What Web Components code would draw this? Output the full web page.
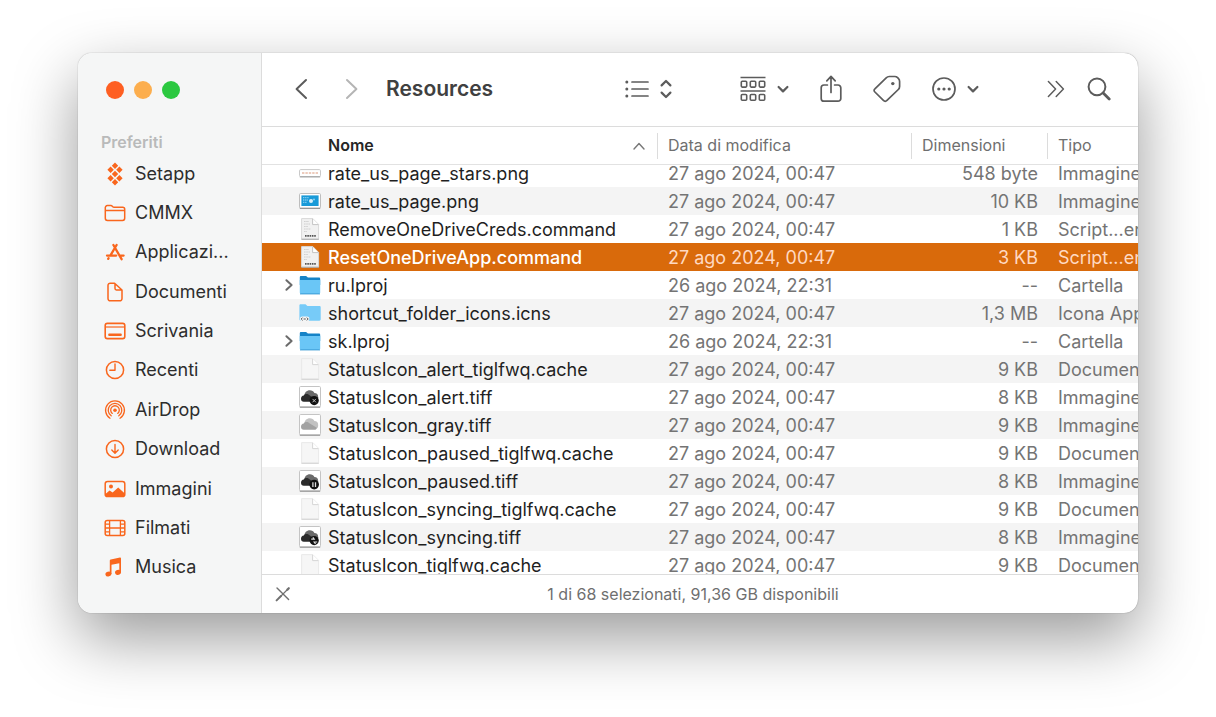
<!DOCTYPE html>
<html lang="it">
<head>
<meta charset="utf-8">
<meta name="viewport" content="width=device-width, initial-scale=1">
<title>Resources</title>
<style>
    * {
        box-sizing: border-box
    }
    body {
        margin: 0;
        height: 100vh;
        padding: 53px 78px 104px;
        background: white;
        font-family: Inter, "Liberation Sans", sans-serif;
        display: flex
    }
</style>
</head>
<body>
    <finder-window>
        <finder-sidebar slot="sidebar" heading="Preferiti">
            <sidebar-item icon="setapp">Setapp</sidebar-item>
            <sidebar-item icon="folder">CMMX</sidebar-item>
            <sidebar-item icon="apps">Applicazi...</sidebar-item>
            <sidebar-item icon="doc">Documenti</sidebar-item>
            <sidebar-item icon="desktop">Scrivania</sidebar-item>
            <sidebar-item icon="clock">Recenti</sidebar-item>
            <sidebar-item icon="airdrop">AirDrop</sidebar-item>
            <sidebar-item icon="download">Download</sidebar-item>
            <sidebar-item icon="picture">Immagini</sidebar-item>
            <sidebar-item icon="film">Filmati</sidebar-item>
            <sidebar-item icon="music">Musica</sidebar-item>
        </finder-sidebar>
        <finder-toolbar slot="toolbar">Resources</finder-toolbar>
        <file-list></file-list>
        <status-bar slot="status">1 di 68 selezionati, 91,36 GB disponibili</status-bar>
    </finder-window>

<script>
// every icon: [width, height, markup]
const ICONS = {
    // sidebar, 22 x 24
    setapp: [22, 24, `<g fill="currentColor">
        <path d="M11 0.5l3.2 3.2-3.2 3.2-3.2-3.2zM6.6 4.6l3.2 3.2-3.2 3.2-3.2-3.2zM15.4 4.6l3.2 3.2-3.2 3.2-3.2-3.2zM11 8.8l3.2 3.2-3.2 3.2-3.2-3.2zM6.6 13l3.2 3.2-3.2 3.2-3.2-3.2zM15.4 13l3.2 3.2-3.2 3.2-3.2-3.2zM11 17.1l3.2 3.2-3.2 3.2-3.2-3.2z"/></g>`],
    folder: [22, 24, `<path d="M1.3 17.2V6.6a2 2 0 0 1 2-2h3.6c1.6 0 1.6 1.7 3.2 1.7h8.6a2 2 0 0 1 2 2v8.9a2.2 2.2 0 0 1-2.2 2.2h-15a2.2 2.2 0 0 1-2.2-2.2zM1.3 9.6h19.4" fill="none" stroke="currentColor" stroke-width="1.5"/>`],
    apps: [22, 24, `<g fill="none" stroke="currentColor" stroke-width="2.3" stroke-linecap="round"><path d="M12.6 5L6.6 15.2M9.4 5l8.2 14.2M3 15.6h9.2M15.6 15.6h4M4.2 18.8l.4-.6"/></g>`],
    doc: [22, 24, `<path d="M4 18.6V5.4a2.2 2.2 0 0 1 2.2-2.2h4.4L18 10v8.6a2.2 2.2 0 0 1-2.2 2.2H6.2A2.2 2.2 0 0 1 4 18.6zM11 3.4v5.2c0 .9.5 1.4 1.4 1.4h5.4" fill="none" stroke="currentColor" stroke-width="1.5" stroke-linejoin="round"/>`],
    desktop: [22, 24, `<rect x="1.2" y="4.4" width="19.6" height="15.2" rx="2.2" fill="none" stroke="currentColor" stroke-width="1.6"/><path d="M1.3 8h19.4" stroke="currentColor" stroke-width="1.2"/><rect x="4.2" y="14.4" width="13.6" height="2.6" rx="1" fill="currentColor"/>`],
    clock: [22, 24, `<circle cx="11" cy="12" r="8.6" fill="none" stroke="currentColor" stroke-width="1.5"/><path d="M11 6v6.2H5.8" fill="none" stroke="currentColor" stroke-width="1.4" stroke-linecap="round" stroke-linejoin="round"/>`],
    airdrop: [22, 24, `<g fill="none" stroke="currentColor" stroke-width="1.3" stroke-linecap="round"><path d="M6 20.2a9.4 9.4 0 1 1 10 0"/><path d="M7.2 17.8a6.8 6.8 0 1 1 7.6 0"/><path d="M8.3 15.4a4.3 4.3 0 1 1 5.4 0"/></g><circle cx="11" cy="12.2" r="1.8" fill="currentColor"/>`],
    download: [22, 24, `<circle cx="11" cy="12" r="8.6" fill="none" stroke="currentColor" stroke-width="1.5"/><path d="M11 7.4v8.6M7.8 13l3.2 3.2 3.2-3.2" fill="none" stroke="currentColor" stroke-width="1.4" stroke-linecap="round" stroke-linejoin="round"/>`],
    picture: [22, 24, `<rect x="1.2" y="4.4" width="19.6" height="15.2" rx="2.4" fill="none" stroke="currentColor" stroke-width="1.5"/><circle cx="7" cy="9.4" r="2" fill="currentColor"/><path d="M1.4 17l4.2-3.6 3 2.2 5.6-5 6.6 5.8v1.6c0 1-.6 1.6-1.6 1.6H3c-1 0-1.6-.6-1.6-1.6z" fill="currentColor"/>`],
    film: [22, 24, `<rect x="1.2" y="4.4" width="19.6" height="15.2" rx="2" fill="none" stroke="currentColor" stroke-width="1.5"/><path d="M5.6 4.4v15.2M16.4 4.4v15.2M5.6 12h10.8M1.2 8.2h4.4M1.2 12h4.4M1.2 15.8h4.4M16.4 8.2h4.4M16.4 12h4.4M16.4 15.8h4.4" stroke="currentColor" stroke-width="1.3"/>`],
    music: [22, 24, `<g fill="currentColor"><ellipse cx="4.4" cy="19" rx="3" ry="2.4" transform="rotate(-18 4.4 19)"/><ellipse cx="14" cy="17.4" rx="3" ry="2.4" transform="rotate(-18 14 17.4)"/><path d="M5.8 19V5.6c0-.6.4-1 1-1.1l9.2-1.9c.6-.1 1 .2 1 .8v14h-1.7V8.2L7.5 9.8V19z"/></g>`],

    // toolbar
    back: [14, 22, `<path d="M12 2L2.6 11 12 20" fill="none" stroke="currentColor" stroke-width="2" stroke-linecap="round" stroke-linejoin="round"/>`],
    forward: [14, 22, `<path d="M2 2l9.4 9L2 20" fill="none" stroke="currentColor" stroke-width="2" stroke-linecap="round" stroke-linejoin="round"/>`],
    list: [24, 20, `<g fill="currentColor"><circle cx="1.8" cy="3" r="1.5"/><circle cx="1.8" cy="10" r="1.5"/><circle cx="1.8" cy="17" r="1.5"/></g><path d="M7 3h16M7 10h16M7 17h16" stroke="currentColor" stroke-width="1.7" stroke-linecap="round"/>`],
    updown: [12, 20, `<path d="M1.6 6.4L6 2l4.4 4.4M1.6 13.6L6 18l4.4-4.4" fill="none" stroke="currentColor" stroke-width="2.2" stroke-linecap="round" stroke-linejoin="round"/>`],
    group: [26, 26, `<g fill="none" stroke="currentColor"><path d="M.5 1.5h25M.5 15h25" stroke-width="1.5"/><g stroke-width="1.6"><rect x="1.3" y="5.3" width="5.4" height="5.8" rx="1"/><rect x="10.3" y="5.3" width="5.4" height="5.8" rx="1"/><rect x="19.3" y="5.3" width="5.4" height="5.8" rx="1"/><rect x="1.3" y="18.5" width="5.4" height="5.8" rx="1"/><rect x="10.3" y="18.5" width="5.4" height="5.8" rx="1"/><rect x="19.3" y="18.5" width="5.4" height="5.8" rx="1"/></g></g>`],
    caret: [12, 10, `<path d="M1.6 3L6 7.4 10.4 3" fill="none" stroke="currentColor" stroke-width="2.2" stroke-linecap="round" stroke-linejoin="round"/>`],
    share: [22, 28, `<path d="M7.4 10H4a2.8 2.8 0 0 0-2.8 2.8v10.6A2.8 2.8 0 0 0 4 26.2h14a2.8 2.8 0 0 0 2.8-2.8V12.8A2.8 2.8 0 0 0 18 10h-3.4M11 17.4V1.6M6.8 5.8L11 1.4l4.2 4.4" fill="none" stroke="currentColor" stroke-width="1.7" stroke-linecap="round" stroke-linejoin="round"/>`],
    tag: [28, 28, `<path d="M1.9 13.9L13.2 2.8c1-1 1.8-1.3 3.1-1.3h5.5c1.2 0 2 .4 2.8 1.2l.9.9c.8.8 1.1 1.6 1.1 2.8v5c0 1.3-.3 2.1-1.3 3.1L14 25.4c-1.2 1.2-2.4 1.2-3.6 0L1.9 17c-1.1-1.1-1.1-2.1 0-3.1z" fill="none" stroke="currentColor" stroke-width="1.7"/><circle cx="19.8" cy="8.6" r="1.7" fill="currentColor"/>`],
    more: [24, 24, `<circle cx="12" cy="12" r="11" fill="none" stroke="currentColor" stroke-width="1.7"/><g fill="currentColor"><circle cx="6.8" cy="12" r="1.6"/><circle cx="12" cy="12" r="1.6"/><circle cx="17.2" cy="12" r="1.6"/></g>`],
    expand: [18, 18, `<path d="M1.4 1.6L8.6 9l-7.2 7.4M9.2 1.6L16.4 9l-7.2 7.4" fill="none" stroke="currentColor" stroke-width="1.5" stroke-linecap="round" stroke-linejoin="round"/>`],
    search: [24, 24, `<circle cx="10" cy="9.8" r="8.4" fill="none" stroke="currentColor" stroke-width="2"/><path d="M16.2 16l6 6" stroke="currentColor" stroke-width="2.8" stroke-linecap="round"/>`],

    // list and status bar
    sort: [12, 8, `<path d="M1 7l5-5.4L11 7" fill="none" stroke="currentColor" stroke-width="1.4" stroke-linecap="round" stroke-linejoin="round"/>`],
    disclose: [10, 14, `<path d="M2.4 2.2L7.6 7l-5.2 4.8" fill="none" stroke="currentColor" stroke-width="2" stroke-linecap="round" stroke-linejoin="round"/>`],
    tools: [16, 16, `<g stroke="currentColor" stroke-linecap="round"><path d="M2 2l11.6 11.6" stroke-width="1.4"/><path d="M1.6 14.4L6 10" stroke-width="2"/><path d="M6 10l6-6" stroke-width="1.2"/><path d="M12.4 3.6l1.4-1.4" stroke-width="2.2"/></g>`],

    // file kinds, 22 x 24
    stars: [22, 24, `<rect x=".5" y="8.6" width="21" height="7" rx="1.2" fill="#fff" stroke="#c9c9c9"/><path d="M.8 15.9h20.4" stroke="#999"/><path d="M3 12h16" stroke="#e8bba6" stroke-width="1.4" stroke-dasharray="2.4 1"/>`],
    screenshot: [22, 24, `<rect x=".5" y="4.5" width="21" height="14.6" rx="1.2" fill="#fff" stroke="#bdbdbd"/><path d="M.8 19.4h20.4" stroke="#8f8f8f"/><rect x="2.4" y="6.4" width="17.2" height="10.6" fill="#189ad8"/><path d="M4 8.6h6M4 11h5M4 13.4h4" stroke="#7fcaf0" stroke-width="1.3" stroke-dasharray="1.4 .7"/><circle cx="12" cy="12" r="2" fill="#d6effb"/><circle cx="15" cy="10.6" r="1" fill="#8bd0f2"/>`],
    script: [22, 24, `<path d="M2.6 1.6h11.2l5.8 5.8V22H2.6z" fill="#f1f1f1" stroke="#d8d8d8"/><path d="M13.6 1.8v5.8h5.8" fill="#fff" stroke="#c4c4c4"/><path d="M5 4.5h5M5 7h6M5 9.5h4M5 12h7M5 14.5h3" stroke="#d0d0d0" stroke-dasharray="1.6 .6"/><path d="M6 18.9h11" stroke="#555" stroke-width="1.6" stroke-dasharray="1.6 .7"/><path d="M2.4 22.3h17.4" stroke="#aaa"/>`],
    blank: [22, 24, `<path d="M2.6 1.6h11.2l5.8 5.8V22H2.6z" fill="#f6f6f6" stroke="#e9e9e9"/><path d="M13.6 1.8v5.8h5.8" fill="#fff" stroke="#d6d6d6"/><path d="M2.4 22.3h17.4" stroke="#d2d2d2"/>`],
    dir: [22, 24, `<path d="M.8 4.2c0-.8.5-1.3 1.3-1.3h5l1.8 1.7h11c.8 0 1.3.5 1.3 1.3V12H.8z" fill="#1583c7"/><path d="M.8 7h20.4v12.6c0 .9-.5 1.4-1.4 1.4H2.2c-.9 0-1.4-.5-1.4-1.4z" fill="#6ac6f6"/><path d="M1 20.9h20" stroke="#3c9bd4"/>`],
    icns: [22, 24, `<path d="M.4 4.5c0-.8.5-1.3 1.3-1.3h4.8L8.4 5h12c.8 0 1.3.5 1.3 1.3v12c0 .9-.5 1.4-1.4 1.4H1.8c-.9 0-1.4-.5-1.4-1.4z" fill="#77cbf8"/><rect x="1" y="15.6" width="9.4" height="4.6" rx="2.2" fill="#f5f5f5"/><path d="M3.6 16.6L2.2 18l1.4 1.4M7.8 16.6L9.2 18l-1.4 1.4M4.6 18h2.2" fill="none" stroke="#555"/>`],
    alert: [22, 24, cloud('#2b2b2b', '#6a6a6a') + `<circle cx="15.2" cy="15.6" r="4.6" fill="#111"/><path d="M13.5 13.9l3.4 3.4m0-3.4l-3.4 3.4" stroke="#bbb"/>`],
    gray: [22, 24, cloud('#a2a2a2', '#c2c2c2')],
    paused: [22, 24, cloud('#2b2b2b', '#6a6a6a') + `<circle cx="15.2" cy="15.6" r="4.8" fill="#111"/><path d="M13.9 13.2v4.8M16.5 13.2v4.8" stroke="#ddd" stroke-width="1.3"/>`],
    syncing: [22, 24, cloud('#2b2b2b', '#6a6a6a') + `<circle cx="15.2" cy="15.6" r="4.6" fill="#111"/><path d="M12.2 14.2h3l-1.3-1.8M18.2 17h-3l1.3 1.8" fill="none" stroke="#ddd" stroke-width="1.2"/>`]
}

// framed thumbnail with a two-tone cloud
function cloud(dark, light) {
    return `<rect x=".5" y="1.5" width="21" height="20.4" rx="1.2" fill="#fff" stroke="#c4c4c4"/>
        <path d="M.8 22.2h20.4" stroke="#8c8c8c"/>
        <path d="M5.4 11c-.2-3.4 2.4-5.8 5.4-5.8 2.2 0 3.8 1 4.6 2.8 2.4 0 3.8 1.4 3.8 4.2 0 2.6-1.2 3.4-2.6 3.4H6z" fill="${light}"/>
        <path d="M4.8 16.8c-1.8 0-2.8-1.2-2.8-3 0-1.9 1.1-3.2 2.8-3.4 1.2-1.8 4.6-2 6 .2l7 4.2c-.2 1.4-1 2-2.2 2z" fill="${dark}"/>`
}

const FILES = [
    ['stars', 'rate_us_page_stars.png', '27 ago 2024, 00:47', '548 byte', 'Immagine'],
    ['screenshot', 'rate_us_page.png', '27 ago 2024, 00:47', '10 KB', 'Immagine'],
    ['script', 'RemoveOneDriveCreds.command', '27 ago 2024, 00:47', '1 KB', 'Script...er'],
    ['script', 'ResetOneDriveApp.command', '27 ago 2024, 00:47', '3 KB', 'Script...er'],
    ['dir', 'ru.lproj', '26 ago 2024, 22:31', '--', 'Cartella'],
    ['icns', 'shortcut_folder_icons.icns', '27 ago 2024, 00:47', '1,3 MB', 'Icona App'],
    ['dir', 'sk.lproj', '26 ago 2024, 22:31', '--', 'Cartella'],
    ['blank', 'StatusIcon_alert_tiglfwq.cache', '27 ago 2024, 00:47', '9 KB', 'Documen'],
    ['alert', 'StatusIcon_alert.tiff', '27 ago 2024, 00:47', '8 KB', 'Immagine'],
    ['gray', 'StatusIcon_gray.tiff', '27 ago 2024, 00:47', '9 KB', 'Immagine'],
    ['blank', 'StatusIcon_paused_tiglfwq.cache', '27 ago 2024, 00:47', '9 KB', 'Documen'],
    ['paused', 'StatusIcon_paused.tiff', '27 ago 2024, 00:47', '8 KB', 'Immagine'],
    ['blank', 'StatusIcon_syncing_tiglfwq.cache', '27 ago 2024, 00:47', '9 KB', 'Documen'],
    ['syncing', 'StatusIcon_syncing.tiff', '27 ago 2024, 00:47', '8 KB', 'Immagine'],
    ['blank', 'StatusIcon_tiglfwq.cache', '27 ago 2024, 00:47', '9 KB', 'Documen']
]
const SELECTED = 'ResetOneDriveApp.command'

class FinderIcon extends HTMLElement {
    constructor() {
        super()
        this.attachShadow({mode: 'open'})
    }

    connectedCallback() {
        const [w, h, body] = ICONS[this.getAttribute('name')]
        this.shadowRoot.innerHTML = `
            <style>
                :host {
                    display: block;
                    flex: none
                }
                svg {
                    display: block
                }
            </style>
            <svg width="${w}" height="${h}" viewBox="0 0 ${w} ${h}" aria-hidden="true">${body}</svg>
        `
    }
}

class FinderWindow extends HTMLElement {
    constructor() {
        super()
        this.attachShadow({mode: 'open'})
        this.shadowRoot.innerHTML = `
            <style>
                :host {
                    flex: 1;
                    min-width: 0;
                    display: grid;
                    grid-template-columns: 183px minmax(0, 1fr);
                    border-radius: 14px;
                    overflow: hidden;
                    background: white;
                    box-shadow: 0 0 1px rgba(0,0,0,0.5), 0 25px 64px rgba(0,0,0,0.4)
                }
                main {
                    display: flex;
                    flex-direction: column;
                    min-height: 0;
                    border-left: 1px solid #dcdcdc
                }
            </style>
            <slot name="sidebar"></slot>
            <main>
                <slot name="toolbar"></slot>
                <slot></slot>
                <slot name="status"></slot>
            </main>
        `
    }
}

class FinderSidebar extends HTMLElement {
    constructor() {
        super()
        this.attachShadow({mode: 'open'})
        this.shadowRoot.innerHTML = `
            <style>
                :host {
                    display: flex;
                    flex-direction: column;
                    min-height: 0;
                    padding: 28px 16px 26px 23px;
                    background: #f5f6f6
                }
                #lights {
                    display: flex;
                    gap: 10px;
                    padding: 0 5px
                }
                #lights button {
                    width: 18px;
                    height: 18px;
                    padding: 0;
                    border: 0;
                    border-radius: 50%
                }
                #close { background: #fe5f22 }
                #minimize { background: #fcae4e }
                #zoom { background: #2bc840 }
                h2 {
                    margin: 32px 0 1px;
                    font-size: 16px;
                    line-height: 22px;
                    font-weight: 600;
                    color: #b9baba
                }
                nav {
                    flex: 1;
                    display: flex;
                    flex-direction: column
                }
            </style>
            <div id="lights">
                <button id="close" aria-label="Chiudi"></button>
                <button id="minimize" aria-label="Riduci"></button>
                <button id="zoom" aria-label="Ingrandisci"></button>
            </div>
            <h2></h2>
            <nav><slot></slot></nav>
        `
    }

    connectedCallback() {
        this.shadowRoot.querySelector('h2').textContent = this.getAttribute('heading')
    }
}

class SidebarItem extends HTMLElement {
    constructor() {
        super()
        this.attachShadow({mode: 'open'})
    }

    connectedCallback() {
        this.shadowRoot.innerHTML = `
            <style>
                :host {
                    flex: 1;
                    display: flex;
                    align-items: center
                }
                a {
                    display: flex;
                    align-items: center;
                    gap: 9px;
                    padding-left: 3px;
                    font-size: 18px;
                    line-height: 24px;
                    white-space: nowrap;
                    text-decoration: none;
                    color: #2d2d2d
                }
                finder-icon {
                    color: #f9661d
                }
            </style>
            <a href="#${this.getAttribute('icon')}">
                <finder-icon name="${this.getAttribute('icon')}"></finder-icon>
                <span><slot></slot></span>
            </a>
        `
    }
}

class ToolButton extends HTMLElement {
    constructor() {
        super()
        this.attachShadow({mode: 'open'})
    }

    connectedCallback() {
        const icons = this.getAttribute('icons').split(' ')
        this.shadowRoot.innerHTML = `
            <style>
                :host {
                    display: block;
                    flex: none;
                    color: #5c5c5c
                }
                :host([dimmed]) {
                    color: #b5b5b5
                }
                button {
                    display: flex;
                    align-items: center;
                    gap: 11px;
                    padding: 0;
                    border: 0;
                    background: none;
                    color: inherit
                }
            </style>
            <button aria-label="${this.getAttribute('label')}">
                ${icons.map(name => `<finder-icon name="${name}"></finder-icon>`).join('')}
            </button>
        `
    }
}

class FinderToolbar extends HTMLElement {
    constructor() {
        super()
        this.attachShadow({mode: 'open'})
        this.shadowRoot.innerHTML = `
            <style>
                :host {
                    flex: none;
                    display: flex;
                    align-items: center;
                    gap: 68px;
                    height: 74px;
                    padding: 0 27px 1px 32px;
                    box-sizing: border-box;
                    border-bottom: 1px solid #dcdcdc
                }
                div {
                    display: flex;
                    align-items: center
                }
                #place {
                    flex: 1;
                    min-width: 0
                }
                h1 {
                    margin: 0 0 0 27px;
                    font-size: 21px;
                    line-height: 28px;
                    font-weight: 600;
                    color: #404040
                }
                #history {
                    gap: 37px
                }
                #actions {
                    gap: 31px
                }
                #extra {
                    gap: 22px
                }
            </style>
            <div id="place">
                <div id="history">
                    <tool-button icons="back" label="Indietro"></tool-button>
                    <tool-button icons="forward" label="Avanti" dimmed></tool-button>
                </div>
                <h1><slot></slot></h1>
            </div>
            <tool-button icons="list updown" label="Vista"></tool-button>
            <div id="actions">
                <tool-button icons="group caret" label="Raggruppa"></tool-button>
                <tool-button icons="share" label="Condividi"></tool-button>
                <tool-button icons="tag" label="Tag"></tool-button>
                <tool-button icons="more caret" label="Azioni"></tool-button>
            </div>
            <div id="extra">
                <tool-button icons="expand" label="Altro"></tool-button>
                <tool-button icons="search" label="Cerca"></tool-button>
            </div>
        `
    }
}

class FileList extends HTMLElement {
    constructor() {
        super()
        this.attachShadow({mode: 'open'})
        this.shadowRoot.innerHTML = `
            <style>
                :host {
                    display: block;
                    flex: 1;
                    min-height: 0;
                    overflow: auto;
                    scrollbar-width: none
                }
                table {
                    width: 100%;
                    table-layout: fixed;
                    border-collapse: separate;
                    border-spacing: 0;
                    white-space: nowrap
                }
                .date { width: 254px }
                .size { width: 136px }
                .kind { width: 91px }
                thead {
                    position: sticky;
                    top: 0;
                    z-index: 1;
                    background: white
                }
                th {
                    height: 38px;
                    padding: 0;
                    border-bottom: 1px solid #e2e2e2;
                    font-size: 16px;
                    font-weight: 400;
                    text-align: left;
                    color: #6f6f6f;
                    box-sizing: border-box
                }
                th div {
                    display: flex;
                    justify-content: space-between;
                    height: 26px;
                    line-height: 24px;
                    padding-left: 10px;
                    border-left: 1px solid #dcdcdc
                }
                th:first-child div {
                    padding: 0 12px 0 66px;
                    border-left: 0;
                    font-weight: 600;
                    color: #262626
                }
                th finder-icon {
                    align-self: center;
                    color: #777
                }
                td {
                    height: 28px;
                    padding: 2px 0 0 11px;
                    font-size: 18px;
                    line-height: 26px;
                    color: #747474;
                    overflow: hidden;
                    box-sizing: border-box
                }
                td:first-child {
                    padding: 0 0 0 22px;
                    color: #1f1f1f
                }
                td:nth-child(3) {
                    padding-right: 9px;
                    text-align: right
                }
                tbody tr:nth-child(even) {
                    background: #f4f4f4
                }
                tbody tr.selected {
                    background: #d96a0b
                }
                .selected td {
                    color: #ffd9c2
                }
                .selected td:first-child {
                    color: white;
                    font-weight: 500
                }
                .name {
                    display: grid;
                    grid-template-columns: 10px 22px minmax(0, 1fr);
                    align-items: center;
                    height: 28px
                }
                .name button {
                    padding: 0;
                    border: 0;
                    background: none;
                    color: #6b6b6b
                }
                .name finder-icon {
                    grid-column: 2;
                    margin-left: 5px
                }
                .name button finder-icon {
                    margin: 0
                }
                .name span {
                    padding: 2px 0 0 12px
                }
            </style>
            <table>
                <colgroup><col><col class="date"><col class="size"><col class="kind"></colgroup>
                <thead>
                    <tr>
                        <th scope="col" aria-sort="ascending"><div>Nome <finder-icon name="sort"></finder-icon></div></th>
                        <th scope="col"><div>Data di modifica</div></th>
                        <th scope="col"><div>Dimensioni</div></th>
                        <th scope="col"><div>Tipo</div></th>
                    </tr>
                </thead>
                <tbody>
                    ${FILES.map(([icon, name, date, size, kind]) => `
                        <tr class="${name === SELECTED ? 'selected' : ''}">
                            <td><div class="name">
                                ${icon === 'dir' ? '<button aria-label="Espandi"><finder-icon name="disclose"></finder-icon></button>' : ''}
                                <finder-icon name="${icon}"></finder-icon>
                                <span>${name}</span>
                            </div></td>
                            <td>${date}</td>
                            <td>${size}</td>
                            <td>${kind}</td>
                        </tr>
                    `).join('')}
                </tbody>
            </table>
        `
    }

    connectedCallback() {
        // the list starts slightly scrolled under its header
        this.scrollTop = 6
    }
}

class StatusBar extends HTMLElement {
    constructor() {
        super()
        this.attachShadow({mode: 'open'})
        this.shadowRoot.innerHTML = `
            <style>
                :host {
                    flex: none;
                    display: grid;
                    grid-template-columns: 16px 1fr;
                    align-items: center;
                    height: 39px;
                    padding: 0 43px 0 13px;
                    box-sizing: border-box;
                    border-top: 1px solid #dcdcdc;
                    font-size: 16px;
                    line-height: 20px;
                    text-align: center;
                    color: #6f6f6f
                }
                finder-icon {
                    color: #707070
                }
            </style>
            <finder-icon name="tools"></finder-icon>
            <span><slot></slot></span>
        `
    }
}

customElements.define('finder-icon', FinderIcon)
customElements.define('tool-button', ToolButton)
customElements.define('sidebar-item', SidebarItem)
customElements.define('finder-window', FinderWindow)
customElements.define('finder-sidebar', FinderSidebar)
customElements.define('finder-toolbar', FinderToolbar)
customElements.define('status-bar', StatusBar)
// last, so that its scroll box already has its final height
customElements.define('file-list', FileList)
</script>
</body>
</html>
